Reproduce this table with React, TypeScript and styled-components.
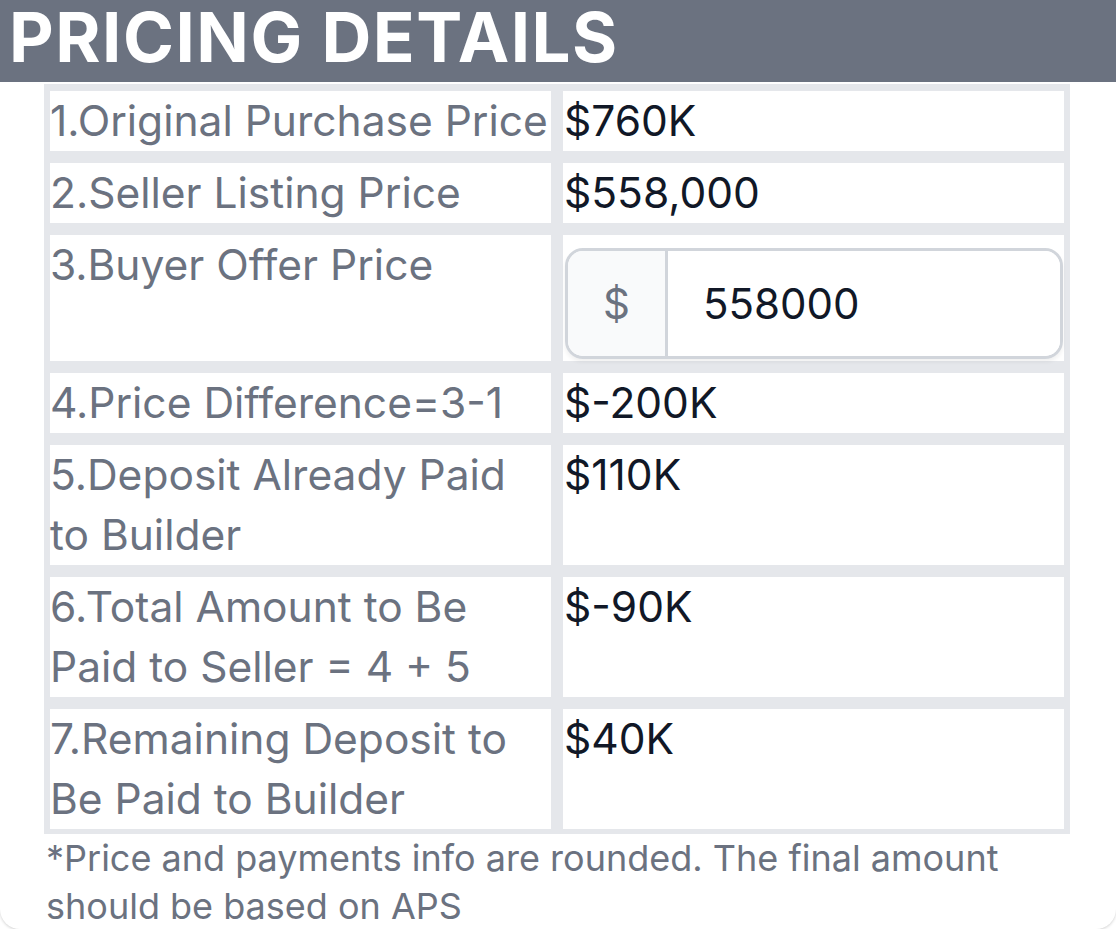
import React from 'react'
import styled, { createGlobalStyle } from 'styled-components'

const GlobalStyle = createGlobalStyle`
  html, body {
    margin: 0;
    padding: 0;
    background: #ffffff;
  }
  body {
    font-family: Inter, "Noto Sans", sans-serif;
  }
`

const rows = [
  { label: '1.Original Purchase Price', value: '$760K' },
  { label: '2.Seller Listing Price', value: '$558,000' },
  { label: '3.Buyer Offer Price', input: '558000' },
  { label: '4.Price Difference=3-1', value: '$-200K' },
  { label: '5.Deposit Already Paid to Builder', value: '$110K' },
  { label: '6.Total Amount to Be Paid to Seller = 4 + 5', value: '$-90K' },
  { label: '7.Remaining Deposit to Be Paid to Builder', value: '$40K' },
]

export default function App() {
  return (
    <>
      <GlobalStyle />
      <Card>
        <Header>PRICING DETAILS</Header>
        <Table>
          {rows.map((row) => (
            <React.Fragment key={row.label}>
              <LabelCell>{row.label}</LabelCell>
              {row.input ? (
                <ValueCell>
                  <InputGroup>
                    <Addon>$</Addon>
                    <PriceInput defaultValue={row.input} />
                  </InputGroup>
                </ValueCell>
              ) : (
                <ValueCell>{row.value}</ValueCell>
              )}
            </React.Fragment>
          ))}
        </Table>
        <Note>*Price and payments info are rounded. The final amount should be based on APS</Note>
      </Card>
    </>
  )
}

const Card = styled.div`
  display: flex;
  flex-direction: column;
  width: 1116px;
  height: 929px;
  box-sizing: border-box;
  background: #ffffff;
  border-radius: 0 0 20px 20px;
  box-shadow: 0 1px 3px rgba(0, 0, 0, 0.18);
  overflow: hidden;
`

const Header = styled.div`
  flex: none;
  height: 82px;
  background: #6b7280;
  color: #ffffff;
  font-size: 69px;
  font-weight: 700;
  letter-spacing: 1.5px;
  line-height: 74px;
  padding-left: 9px;
  white-space: nowrap;
`

const Table = styled.div`
  display: grid;
  grid-template-columns: minmax(0, 1fr) minmax(0, 1fr);
  column-gap: 12px;
  row-gap: 12px;
  margin: 2px 46px 0 44px;
  padding: 7px 6px 5px 6px;
  background: #e5e7eb;
`

const Cell = styled.div`
  background: #ffffff;
  font-size: 42.5px;
  line-height: 60px;
  min-height: 60px;
`

const LabelCell = styled(Cell)`
  color: #6b7280;
`

const ValueCell = styled(Cell)`
  color: #111827;
  padding-left: 1px;
`

const InputGroup = styled.div`
  display: flex;
  height: 111px;
  margin: 13px 1px 2px 1px;
  border: 3px solid #d1d5db;
  border-radius: 18px;
  box-shadow: 0 3px 4px rgba(0, 0, 0, 0.06);
  overflow: hidden;
  box-sizing: border-box;
`

const Addon = styled.span`
  display: flex;
  align-items: center;
  justify-content: center;
  width: 97px;
  background: #f9fafb;
  border-right: 3px solid #d1d5db;
  color: #6b7280;
  font-size: 42px;
`

const PriceInput = styled.input`
  flex: 1;
  min-width: 0;
  border: 0;
  outline: none;
  padding: 0 0 0 35px;
  font-family: Inter, "Noto Sans", sans-serif;
  font-size: 42px;
  color: #111827;
  background: #ffffff;
`

const Note = styled.div`
  margin: 0 40px 0 46px;
  font-size: 36px;
  line-height: 48px;
  color: #6b7280;
`
